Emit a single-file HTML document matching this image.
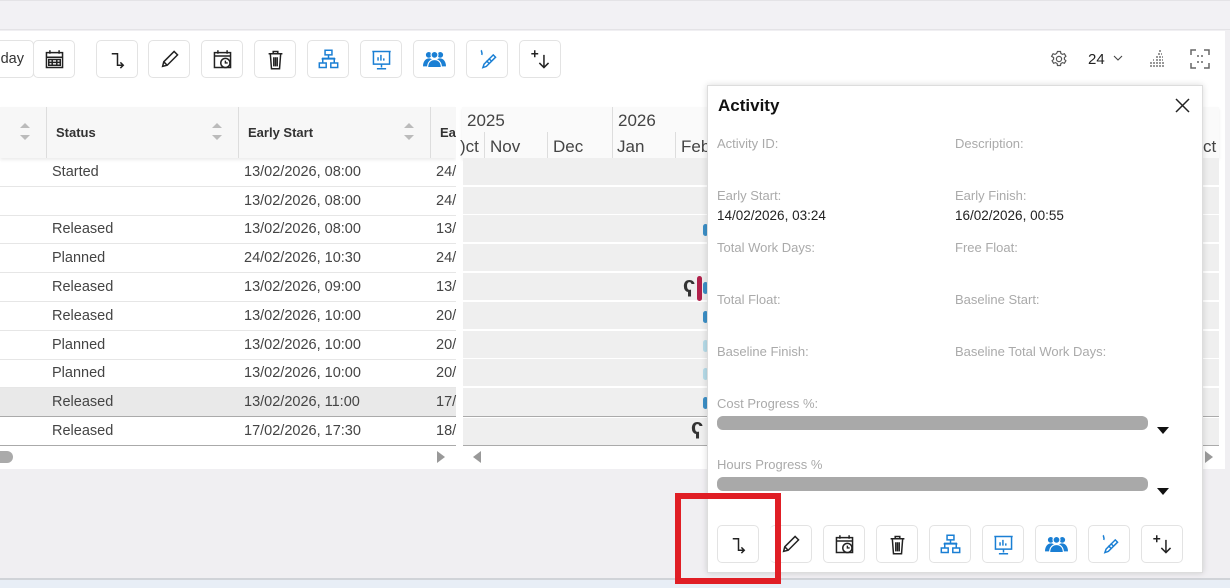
<!DOCTYPE html>
<html><head><meta charset="utf-8"><style>
*{box-sizing:border-box;margin:0;padding:0}
body{width:1230px;height:588px;overflow:hidden;background:#f0eff2;font-family:"Liberation Sans",sans-serif;position:relative;color:#333}
.abs{position:absolute}
.top{left:0;top:0;width:1230px;height:30px;background:#f2f1f4;border-top:1px solid #e4e3e6;border-bottom:1px solid #e4e3e6}
.main{left:0;top:31px;width:1225px;height:438px;background:#fff}
.btn{position:absolute;width:42px;height:38px;border:1px solid #e3e3e3;border-radius:5px;background:#fff;display:flex;align-items:center;justify-content:center}
.btn svg{width:23px;height:23px}
.hdr{top:107px;height:51px;background:#f7f7f7;box-shadow:0 2px 3px rgba(0,0,0,.08)}
.hl{position:absolute;top:107px;width:1px;height:51px;background:#ddd}
.ht{position:absolute;top:125px;font-size:13px;font-weight:bold;color:#333}
.sort{position:absolute;top:120px;width:10px;height:24px}
.row{position:absolute;left:0;width:456px;height:29px;border-bottom:1px solid #e6e6e6;font-size:14.5px;color:#444}
.row span{position:absolute;top:6px}
.grow{position:absolute;left:463px;width:756px;height:27px;background:#efefef}
.pop{left:707px;top:85px;width:496px;height:488px;background:#fff;border:1px solid #ddd;box-shadow:0 0 6px rgba(0,0,0,.15)}
.lab{position:absolute;font-size:13px;color:#aaa}
.val{position:absolute;font-size:13.5px;color:#222}
.bar{position:absolute;left:10px;width:431px;height:14px;border-radius:6px;background:#a9a9a9}
.tri{position:absolute;width:0;height:0;border-left:6px solid transparent;border-right:6px solid transparent;border-top:7px solid #111}
.yr{position:absolute;font-size:17px;color:#444}
</style></head><body>
<svg width="0" height="0" style="position:absolute">
<defs>
<symbol id="i-link" viewBox="0 0 20 20"><path d="M5 5h5v10h5M12.5 12.5l2.5 2.5-2.5 2.5" fill="none" stroke="#222" stroke-width="1.3"/></symbol>
<symbol id="i-pen" viewBox="0 0 20 20"><path d="M4 16l1-4L14 3l3 3-9 9zM5 12l3 3" fill="none" stroke="#222" stroke-width="1.3"/></symbol>
<symbol id="i-cal" viewBox="0 0 20 20"><path d="M3 4h14v13H3zM3 7h14M6 2v3M14 2v3" fill="none" stroke="#222" stroke-width="1.3"/><circle cx="12.5" cy="13" r="4" fill="#fff" stroke="#222" stroke-width="1.3"/><path d="M12.5 11v2h2" fill="none" stroke="#222" stroke-width="1.2"/></symbol>
<symbol id="i-trash" viewBox="0 0 20 20"><path d="M4 5h12M8 5V3h4v2M5.5 5l1 13h7l1-13M8.5 8v8M10 8v8M11.5 8v8" fill="none" stroke="#222" stroke-width="1.3"/></symbol>
<symbol id="i-org" viewBox="0 0 20 20"><path d="M7 2h6v4H7zM2 13h6v4H2zM12 13h6v4h-6zM10 6v3M5 13V9h10v4M4 9.5h12" fill="none" stroke="#1a7fd4" stroke-width="1.3"/></symbol>
<symbol id="i-pres" viewBox="0 0 20 20"><path d="M2 3h16M3 3v11h14V3M10 14v3M6 18h8M7 11V8M9.5 11V6M12 11V9" fill="none" stroke="#1a7fd4" stroke-width="1.3"/></symbol>
<symbol id="i-team" viewBox="0 0 20 20"><circle cx="5" cy="6" r="2.5" fill="#1a7fd4"/><circle cx="15" cy="6" r="2.5" fill="#1a7fd4"/><circle cx="10" cy="6" r="3" fill="#1a7fd4" stroke="#fff"/><path d="M0 16c0-5 3-7 5-7s3 1 3 1h4s1-1 3-1 5 2 5 7z" fill="#1a7fd4"/><path d="M4 17c0-5 3-7 6-7s6 2 6 7z" fill="#1a7fd4" stroke="#fff"/></symbol>
<symbol id="i-edit" viewBox="0 0 20 20"><path d="M6 17l1-3 8-8 2 2-8 8zM9 11l2 2M11 9l2 2M5 2c-1 1 1 2 0 4" fill="none" stroke="#1a7fd4" stroke-width="1.3"/></symbol>
<symbol id="i-add" viewBox="0 0 20 20"><path d="M2 5h6M5 2v6M13 6v11M9 13l4 4 4-4" fill="none" stroke="#222" stroke-width="1.3"/></symbol>
<symbol id="i-cal2" viewBox="0 0 20 20"><path d="M3 4h14v13H3zM3 8h14M6 2v3M14 2v3M5 10h10v5H5zM8 10v5M12 10v5M5 12.5h10" fill="none" stroke="#222" stroke-width="1.3"/></symbol>
</defs></svg>

<div class="abs top"></div>
<div class="abs main"></div>
<div class="abs" style="left:0;top:578px;width:1230px;height:2px;background:#d0d3d8"></div>
<div class="abs" style="left:0;top:580px;width:1230px;height:8px;background:#e8eef6"></div>

<div class="btn" style="left:-10px;top:40px;width:44px;font-size:14.5px;color:#333;justify-content:flex-end;padding-right:9px">day</div>
<div class="btn" style="left:33px;top:40px"><svg><use href="#i-cal2"/></svg></div>
<div class="btn" style="left:96px;top:40px"><svg><use href="#i-link"/></svg></div>
<div class="btn" style="left:148px;top:40px"><svg><use href="#i-pen"/></svg></div>
<div class="btn" style="left:201px;top:40px"><svg><use href="#i-cal"/></svg></div>
<div class="btn" style="left:254px;top:40px"><svg><use href="#i-trash"/></svg></div>
<div class="btn" style="left:307px;top:40px"><svg><use href="#i-org"/></svg></div>
<div class="btn" style="left:360px;top:40px"><svg><use href="#i-pres"/></svg></div>
<div class="btn" style="left:413px;top:40px"><svg><use href="#i-team"/></svg></div>
<div class="btn" style="left:466px;top:40px"><svg><use href="#i-edit"/></svg></div>
<div class="btn" style="left:519px;top:40px"><svg><use href="#i-add"/></svg></div>

<svg class="abs" style="left:1050px;top:50px" width="18" height="18" viewBox="0 0 18 18"><circle cx="9" cy="9" r="2.6" fill="none" stroke="#555" stroke-width="1.2"/><path d="M7.5 1.5h3l.4 2 1.6.9 1.9-.7 1.5 2.6-1.5 1.3v1.8l1.5 1.3-1.5 2.6-1.9-.7-1.6.9-.4 2h-3l-.4-2-1.6-.9-1.9.7-1.5-2.6 1.5-1.3V7.6L1.6 6.3l1.5-2.6 1.9.7 1.6-.9z" fill="none" stroke="#555" stroke-width="1.2"/></svg>
<div class="abs" style="left:1088px;top:51px;font-size:15px;color:#222">24</div>
<svg class="abs" style="left:1113px;top:55px" width="10" height="6"><path d="M1 1l4 4 4-4" fill="none" stroke="#444" stroke-width="1.1"/></svg>
<svg class="abs" style="left:1148px;top:49px" width="18" height="18"><path d="M11 2h3M10 5h4M8 8h7M8 11h7M2 14h14M2 17h14M5 11h1" stroke="#777" stroke-width="1.5" stroke-dasharray="2 1"/></svg>
<svg class="abs" style="left:1190px;top:49px" width="20" height="20"><path d="M1 6V1h5M14 1h5v5M19 14v5h-5M6 19H1v-5M7 7h2M11 7h2M7 13h2M11 13h2" fill="none" stroke="#666" stroke-width="1.5"/></svg>

<div class="abs hdr" style="left:0;width:456px"></div>
<div class="hl" style="left:46px"></div><div class="hl" style="left:238px"></div><div class="hl" style="left:430px"></div>
<div class="ht" style="left:56px">Status</div>
<div class="ht" style="left:248px">Early Start</div>
<div class="ht" style="left:440px">Ea</div>
<svg class="sort" style="left:20px"><path d="M0 8l5-5 5 5zM0 15l5 5 5-5z" fill="#bbb"/></svg>
<svg class="sort" style="left:212px"><path d="M0 8l5-5 5 5zM0 15l5 5 5-5z" fill="#bbb"/></svg>
<svg class="sort" style="left:404px"><path d="M0 8l5-5 5 5zM0 15l5 5 5-5z" fill="#bbb"/></svg>
<div class="abs" style="left:456px;top:107px;width:6px;height:362px;background:#fff"></div>

<div class="row" style="top:158px"><span style="left:52px">Started</span><span style="left:244px">13/02/2026, 08:00</span><span style="left:436px">24/</span></div>
<div class="row" style="top:187px"><span style="left:244px">13/02/2026, 08:00</span><span style="left:436px">24/</span></div>
<div class="row" style="top:215px"><span style="left:52px">Released</span><span style="left:244px">13/02/2026, 08:00</span><span style="left:436px">13/</span></div>
<div class="row" style="top:244px"><span style="left:52px">Planned</span><span style="left:244px">24/02/2026, 10:30</span><span style="left:436px">24/</span></div>
<div class="row" style="top:273px"><span style="left:52px">Released</span><span style="left:244px">13/02/2026, 09:00</span><span style="left:436px">13/</span></div>
<div class="row" style="top:302px"><span style="left:52px">Released</span><span style="left:244px">13/02/2026, 10:00</span><span style="left:436px">20/</span></div>
<div class="row" style="top:331px"><span style="left:52px">Planned</span><span style="left:244px">13/02/2026, 10:00</span><span style="left:436px">20/</span></div>
<div class="row" style="top:359px"><span style="left:52px">Planned</span><span style="left:244px">13/02/2026, 10:00</span><span style="left:436px">20/</span></div>
<div class="row" style="top:388px;background:#e9e9e9;border-bottom:1px solid #aaa"><span style="left:52px">Released</span><span style="left:244px">13/02/2026, 11:00</span><span style="left:436px">17/</span></div>
<div class="row" style="top:417px;border-bottom:1px solid #aaa"><span style="left:52px">Released</span><span style="left:244px">17/02/2026, 17:30</span><span style="left:436px">18/</span></div>
<div class="abs" style="left:0;top:451px;width:13px;height:12px;border-radius:0 6px 6px 0;background:#aaa"></div>
<svg class="abs" style="left:437px;top:451px" width="8" height="12"><path d="M0 0l8 6-8 6z" fill="#999"/></svg>

<div class="abs" style="left:462px;top:107px;width:757px;height:51px;background:#fafafa;box-shadow:0 2px 3px rgba(0,0,0,.08)"></div>
<div class="yr" style="left:467px;top:111px">2025</div>
<div class="abs" style="left:612px;top:107px;width:1px;height:51px;background:#ddd"></div>
<div class="yr" style="left:618px;top:111px">2026</div>
<div class="yr" style="left:460px;top:137px">)ct</div>
<div class="abs" style="left:484px;top:132px;width:1px;height:26px;background:#ddd"></div>
<div class="yr" style="left:490px;top:137px">Nov</div>
<div class="abs" style="left:547px;top:132px;width:1px;height:26px;background:#ddd"></div>
<div class="yr" style="left:553px;top:137px">Dec</div>
<div class="yr" style="left:617px;top:137px">Jan</div>
<div class="abs" style="left:675px;top:132px;width:1px;height:26px;background:#ddd"></div>
<div class="yr" style="left:681px;top:137px">Feb</div>
<div class="yr" style="left:1203px;top:137px">ct</div>
<div class="grow" style="top:158px"></div><div class="grow" style="top:187px"></div><div class="grow" style="top:215px"></div><div class="grow" style="top:244px"></div><div class="grow" style="top:273px"></div><div class="grow" style="top:302px"></div><div class="grow" style="top:331px"></div><div class="grow" style="top:359px"></div><div class="grow" style="top:388px;border-bottom:1px solid #aaa;height:29px"></div><div class="grow" style="top:418px;border-bottom:1px solid #aaa;height:28px"></div>
<div class="abs" style="left:697px;top:276px;width:5px;height:25px;border-radius:3px;background:#b0204a"></div>
<div class="abs" style="left:683px;top:272px;font-size:22px;font-weight:bold">ҁ</div>
<div class="abs" style="left:703px;top:224px;width:5px;height:12px;border-radius:3px;background:#3c8fc6"></div>
<div class="abs" style="left:703px;top:282px;width:5px;height:12px;border-radius:3px;background:#3c8fc6"></div>
<div class="abs" style="left:703px;top:311px;width:5px;height:12px;border-radius:3px;background:#3c8fc6"></div>
<div class="abs" style="left:703px;top:340px;width:5px;height:12px;border-radius:3px;background:#b6dbe8"></div>
<div class="abs" style="left:703px;top:368px;width:5px;height:12px;border-radius:3px;background:#b6dbe8"></div>
<div class="abs" style="left:703px;top:397px;width:5px;height:12px;border-radius:3px;background:#3c8fc6"></div>
<div class="abs" style="left:691px;top:414px;font-size:22px;font-weight:bold">ҁ</div>
<svg class="abs" style="left:473px;top:451px" width="8" height="12"><path d="M8 0L0 6l8 6z" fill="#999"/></svg>
<svg class="abs" style="left:1205px;top:451px" width="8" height="12"><path d="M0 0l8 6-8 6z" fill="#999"/></svg>

<div class="abs pop">
 <div class="abs" style="left:10px;top:10px;font-size:17px;font-weight:bold;color:#111">Activity</div>
 <svg class="abs" style="left:467px;top:12px" width="15" height="15"><path d="M1 1l13 13M14 1L1 14" stroke="#222" stroke-width="1.5"/></svg>
 <div class="lab" style="left:9px;top:50px">Activity ID:</div><div class="lab" style="left:247px;top:50px">Description:</div>
 <div class="lab" style="left:9px;top:102px">Early Start:</div><div class="lab" style="left:247px;top:102px">Early Finish:</div>
 <div class="val" style="left:9px;top:122px">14/02/2026, 03:24</div><div class="val" style="left:247px;top:122px">16/02/2026, 00:55</div>
 <div class="lab" style="left:9px;top:154px">Total Work Days:</div><div class="lab" style="left:247px;top:154px">Free Float:</div>
 <div class="lab" style="left:9px;top:206px">Total Float:</div><div class="lab" style="left:247px;top:206px">Baseline Start:</div>
 <div class="lab" style="left:9px;top:258px">Baseline Finish:</div><div class="lab" style="left:247px;top:258px">Baseline Total Work Days:</div>
 <div class="lab" style="left:9px;top:310px">Cost Progress %:</div>
 <div class="bar" style="top:330px;left:9px"></div><div class="tri" style="left:449px;top:341px"></div>
 <div class="lab" style="left:9px;top:371px">Hours Progress %</div>
 <div class="bar" style="top:391px;left:9px"></div><div class="tri" style="left:449px;top:402px"></div>
</div>
<div class="btn" style="left:717px;top:525px"><svg><use href="#i-link"/></svg></div>
<div class="btn" style="left:770px;top:525px;border-left:none"><svg><use href="#i-pen"/></svg></div>
<div class="btn" style="left:823px;top:525px"><svg><use href="#i-cal"/></svg></div>
<div class="btn" style="left:876px;top:525px"><svg><use href="#i-trash"/></svg></div>
<div class="btn" style="left:929px;top:525px"><svg><use href="#i-org"/></svg></div>
<div class="btn" style="left:982px;top:525px"><svg><use href="#i-pres"/></svg></div>
<div class="btn" style="left:1035px;top:525px"><svg><use href="#i-team"/></svg></div>
<div class="btn" style="left:1088px;top:525px"><svg><use href="#i-edit"/></svg></div>
<div class="btn" style="left:1141px;top:525px"><svg><use href="#i-add"/></svg></div>

<div class="abs" style="left:675px;top:493px;width:106px;height:91px;border:6px solid #e01e25"></div>
</body></html>
